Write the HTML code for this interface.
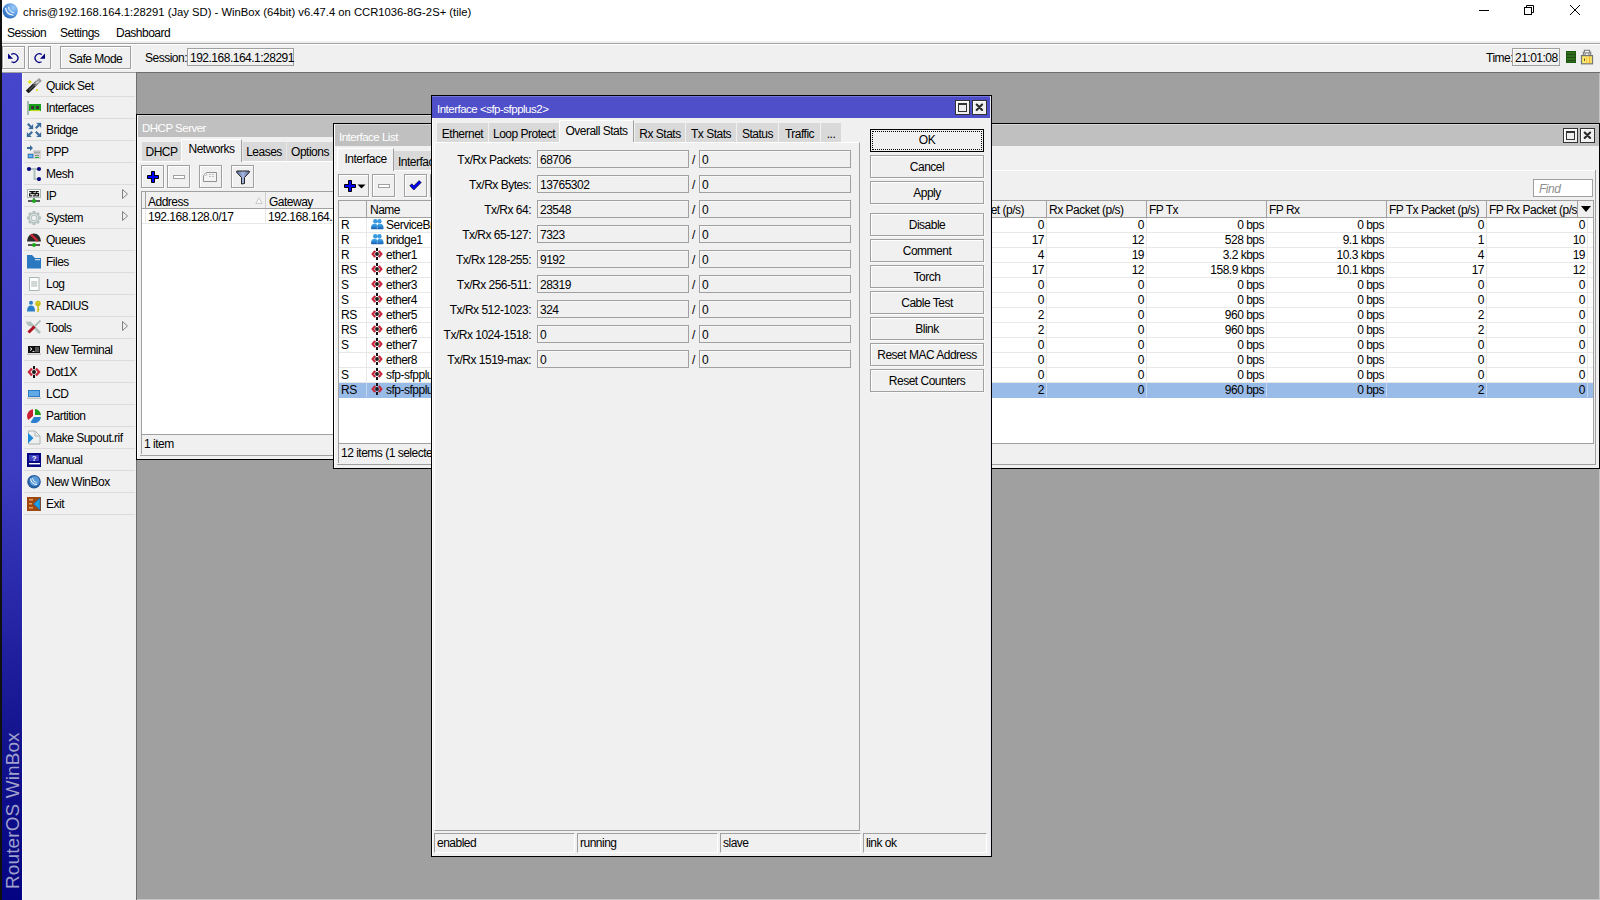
<!DOCTYPE html><html><head><meta charset="utf-8"><style>
*{box-sizing:border-box;margin:0;padding:0}
html,body{width:1600px;height:900px;overflow:hidden}
body{position:relative;background:#a0a0a0;font-family:"Liberation Sans",sans-serif;font-size:12px;letter-spacing:-0.5px;color:#000}
.a{position:absolute}
.t{position:absolute;white-space:nowrap;line-height:15px}
.r{text-align:right}
.c{text-align:center}
.btn{position:absolute;background:#f0f0f0;border:1px solid #a0a0a0;box-shadow:inset 1px 1px 0 #fff,1px 1px 0 #fbfbfb}
.inp{position:absolute;background:#f0f0f0;border:1px solid #a0a0a0;box-shadow:inset 1px 1px 0 #fff}
.sep{position:absolute;height:1px;background:#dcdcdc}
.tabi{position:absolute;background:#d9d9d9}
.wt{color:#fff;font-size:11.5px}
.hdr{position:absolute;background:#f0f0f0}
.tb{position:absolute;width:16px;height:16px;border:1px solid #000;background:#f0f0f0;box-shadow:inset 1px 1px 0 #fff}
</style></head><body>
<div class="a" style="left:0px;top:0px;width:2px;height:900px;background:#101010"></div>
<div class="a" style="left:2px;top:0px;width:1598px;height:41px;background:#fff"></div>
<div class="t " style="left:23px;top:5px;font-size:11.25px;letter-spacing:0">chris@192.168.164.1:28291 (Jay SD) - WinBox (64bit) v6.47.4 on CCR1036-8G-2S+ (tile)</div>
<div class="t " style="left:7px;top:26px;">Session</div>
<div class="t " style="left:60px;top:26px;">Settings</div>
<div class="t " style="left:116px;top:26px;">Dashboard</div>
<div class="a" style="left:2px;top:41px;width:1598px;height:32px;background:#f0f0f0"></div>
<div class="a" style="left:2px;top:43px;width:1598px;height:1px;background:#a0a0a0"></div>
<div class="a" style="left:2px;top:44px;width:1598px;height:1px;background:#fff"></div>
<div class="a" style="left:2px;top:72px;width:1598px;height:1px;background:#a0a0a0"></div>
<div class="btn" style="left:2px;top:46px;width:23px;height:23px;"></div>
<div class="btn" style="left:28px;top:46px;width:23px;height:23px;"></div>
<div class="btn" style="left:60px;top:46px;width:71px;height:23px;"></div>
<div class="t c" style="left:60px;width:71px;top:52px;">Safe Mode</div>
<div class="t " style="left:145px;top:51px;">Session:</div>
<div class="inp" style="left:187px;top:48px;width:107px;height:18px"><div class="t" style="left:2px;top:2px">192.168.164.1:28291</div></div>
<div class="t " style="left:1486px;top:51px;">Time:</div>
<div class="inp" style="left:1512px;top:48px;width:48px;height:18px"><div class="t" style="left:2px;top:2px">21:01:08</div></div>
<svg class="a" style="left:2px;top:3px" width="16" height="16" viewBox="0 0 16 16"><defs><radialGradient id="wbg" cx="0.7" cy="0.3" r="0.9"><stop offset="0" stop-color="#9ccaf8"/><stop offset="0.5" stop-color="#5a9ae0"/><stop offset="1" stop-color="#1656a8"/></radialGradient></defs><circle cx="8.2" cy="7.8" r="7.6" fill="url(#wbg)"/><path d="M3.5 4.8 Q4.5 11.5 11.5 12.2" fill="none" stroke="#fff" stroke-width="1.1"/><path d="M6.4 3.8 Q7 9 12.2 9.8" fill="none" stroke="#fff" stroke-width="0.9"/></svg>
<div class="a" style="left:1479px;top:10px;width:10px;height:1px;background:#000"></div>
<svg class="a" style="left:1523px;top:4px" width="12" height="12" viewBox="0 0 12 12"><rect x="1.5" y="3.5" width="7" height="7" fill="none" stroke="#000" stroke-width="1"/><path d="M3.5 3.5 L3.5 1.5 L10.5 1.5 L10.5 8.5 L8.5 8.5" fill="none" stroke="#000" stroke-width="1"/></svg>
<svg class="a" style="left:1569px;top:4px" width="12" height="12" viewBox="0 0 12 12"><path d="M1 1 L11 11 M11 1 L1 11" stroke="#000" stroke-width="1"/></svg>
<svg class="a" style="left:5px;top:49px" width="18" height="18" viewBox="0 0 18 18"><path d="M6.2 5.5 A4.3 4.3 0 1 1 6.5 12.8" fill="none" stroke="#000080" stroke-width="1.3"/><path d="M3 4.5 L8 9.8 L3 9.8Z" fill="#000080"/></svg>
<svg class="a" style="left:30px;top:49px" width="18" height="18" viewBox="0 0 18 18"><path d="M11.8 5.5 A4.3 4.3 0 1 0 11.5 12.8" fill="none" stroke="#000080" stroke-width="1.3"/><path d="M15 4.5 L10 9.8 L15 9.8Z" fill="#000080"/></svg>
<div class="a" style="left:1566px;top:51px;width:10px;height:12px;background:#2e6e1c;border:1px solid #1c5a10"></div>
<div class="a" style="left:1567px;top:54px;width:8px;height:1px;background:#264a14"></div>
<div class="a" style="left:1567px;top:57px;width:8px;height:1px;background:#264a14"></div>
<div class="a" style="left:1567px;top:60px;width:8px;height:1px;background:#264a14"></div>
<svg class="a" style="left:1580px;top:49px" width="14" height="16" viewBox="0 0 14 16"><path d="M3.3 6.6 V3.2 H4.4 V1.2 H9.6 V3.2 H10.7 V6.6" fill="none" stroke="#777" stroke-width="1.1"/><path d="M5 6.6 V3.9 H9 V6.6" fill="none" stroke="#777" stroke-width="1"/><rect x="1.5" y="6.6" width="11" height="8.2" fill="#fbe96a" stroke="#747474" stroke-width="1.2"/><rect x="6.2" y="7.3" width="1" height="7" fill="#f8c050"/><rect x="9.2" y="7.3" width="1" height="7" fill="#f0a030"/><rect x="4" y="9.6" width="1" height="2.2" fill="#604010"/></svg>
<div class="a" style="left:2px;top:73px;width:20px;height:827px;background:linear-gradient(#4646cc 0%,#3c3cc0 48%,#2a2aac 62%,#14148f 80%,#040482 100%)"></div>
<div class="a" style="left:22px;top:73px;width:114px;height:827px;background:#f0f0f0"></div>
<div class="a" style="left:136px;top:72px;width:1464px;height:1px;background:#6e6e6e"></div>
<div class="a" style="left:136px;top:72px;width:1px;height:828px;background:#6e6e6e"></div>
<div class="a" style="left:1599px;top:73px;width:1px;height:827px;background:#c4c4c4"></div>
<div class="a" style="left:137px;top:899px;width:1463px;height:1px;background:#c4c4c4"></div>
<div class="a" style="left:22px;top:73px;width:1px;height:827px;background:#fafafa"></div>
<div class="t" style="left:3px;top:889px;transform-origin:0 0;transform:rotate(-90deg);font-size:19px;line-height:20px;color:#a0a0cc;letter-spacing:0.1px">RouterOS WinBox</div>
<div class="t " style="left:46px;top:79px;">Quick Set</div>
<div class="a" style="left:24px;top:96px;width:111px;height:1px;background:#dcdcdc"></div>
<div class="t " style="left:46px;top:101px;">Interfaces</div>
<div class="a" style="left:24px;top:118px;width:111px;height:1px;background:#dcdcdc"></div>
<div class="t " style="left:46px;top:123px;">Bridge</div>
<div class="a" style="left:24px;top:140px;width:111px;height:1px;background:#dcdcdc"></div>
<div class="t " style="left:46px;top:145px;">PPP</div>
<div class="a" style="left:24px;top:162px;width:111px;height:1px;background:#dcdcdc"></div>
<div class="t " style="left:46px;top:167px;">Mesh</div>
<div class="a" style="left:24px;top:184px;width:111px;height:1px;background:#dcdcdc"></div>
<div class="t " style="left:46px;top:189px;">IP</div>
<div class="a" style="left:24px;top:206px;width:111px;height:1px;background:#dcdcdc"></div>
<div class="t " style="left:46px;top:211px;">System</div>
<div class="a" style="left:24px;top:228px;width:111px;height:1px;background:#dcdcdc"></div>
<div class="t " style="left:46px;top:233px;">Queues</div>
<div class="a" style="left:24px;top:250px;width:111px;height:1px;background:#dcdcdc"></div>
<div class="t " style="left:46px;top:255px;">Files</div>
<div class="a" style="left:24px;top:272px;width:111px;height:1px;background:#dcdcdc"></div>
<div class="t " style="left:46px;top:277px;">Log</div>
<div class="a" style="left:24px;top:294px;width:111px;height:1px;background:#dcdcdc"></div>
<div class="t " style="left:46px;top:299px;">RADIUS</div>
<div class="a" style="left:24px;top:316px;width:111px;height:1px;background:#dcdcdc"></div>
<div class="t " style="left:46px;top:321px;">Tools</div>
<div class="a" style="left:24px;top:338px;width:111px;height:1px;background:#dcdcdc"></div>
<div class="t " style="left:46px;top:343px;">New Terminal</div>
<div class="a" style="left:24px;top:360px;width:111px;height:1px;background:#dcdcdc"></div>
<div class="t " style="left:46px;top:365px;">Dot1X</div>
<div class="a" style="left:24px;top:382px;width:111px;height:1px;background:#dcdcdc"></div>
<div class="t " style="left:46px;top:387px;">LCD</div>
<div class="a" style="left:24px;top:404px;width:111px;height:1px;background:#dcdcdc"></div>
<div class="t " style="left:46px;top:409px;">Partition</div>
<div class="a" style="left:24px;top:426px;width:111px;height:1px;background:#dcdcdc"></div>
<div class="t " style="left:46px;top:431px;">Make Supout.rif</div>
<div class="a" style="left:24px;top:448px;width:111px;height:1px;background:#dcdcdc"></div>
<div class="t " style="left:46px;top:453px;">Manual</div>
<div class="a" style="left:24px;top:470px;width:111px;height:1px;background:#dcdcdc"></div>
<div class="t " style="left:46px;top:475px;">New WinBox</div>
<div class="a" style="left:24px;top:492px;width:111px;height:1px;background:#dcdcdc"></div>
<div class="t " style="left:46px;top:497px;">Exit</div>
<div class="a" style="left:24px;top:514px;width:111px;height:1px;background:#dcdcdc"></div>
<svg class="a" style="left:26px;top:77px" width="16" height="16" viewBox="0 0 16 16"><line x1="2.6" y1="13.6" x2="9.6" y2="6.8" stroke="#1a1a1a" stroke-width="4" stroke-linecap="square"/><line x1="9.6" y1="6.8" x2="13" y2="3.9" stroke="#9a9a9a" stroke-width="4" stroke-linecap="square"/><line x1="3" y1="13.2" x2="9.4" y2="7" stroke="#505050" stroke-width="1.4"/><line x1="10.2" y1="6.3" x2="12.6" y2="4.2" stroke="#d8d8d8" stroke-width="1.4"/><path d="M3.8 2.4 L4.6 4.1 L6.4 4.9 L4.6 5.7 L3.8 7.4 L3 5.7 L1.2 4.9 L3 4.1Z" fill="#e0e010"/><rect x="10.2" y="12.2" width="1.8" height="1.8" fill="#e0e010"/></svg>
<svg class="a" style="left:26px;top:99px" width="16" height="16" viewBox="0 0 16 16"><rect x="1" y="2" width="2" height="14" fill="#a8b8b4"/><rect x="3" y="5" width="12" height="7" fill="#1aa01a"/><rect x="5.2" y="7" width="2.6" height="3" fill="#3a2a3a"/><rect x="10.1" y="7" width="2.8" height="3" fill="#3a2a3a"/><rect x="4" y="11.2" width="10" height="0.9" fill="#e8e820"/></svg>
<svg class="a" style="left:26px;top:121px" width="16" height="16" viewBox="0 0 16 16"><g fill="#3a6b9c" stroke="#3a6b9c" stroke-width="0.3"><path d="M7 8 L2.5 8 L7 3.5Z"/><path d="M15 2 L10.5 2 L15 6.5Z"/><path d="M1 16 L5.5 16 L1 11.5Z"/><path d="M15 16 L10.5 16 L15 11.5Z"/></g><g stroke="#3a6b9c" stroke-width="2.2"><line x1="5" y1="6" x2="1.8" y2="2.8"/><line x1="13" y1="4" x2="9.8" y2="7.2"/><line x1="3" y1="14" x2="6.2" y2="10.8"/><line x1="13" y1="14" x2="9.8" y2="10.8"/></g></svg>
<svg class="a" style="left:26px;top:143px" width="16" height="16" viewBox="0 0 16 16"><path d="M1 4 L4 4 L4 2 L7 5 L4 8 L4 6 L1 6Z" fill="#3a6b9c"/><rect x="7" y="7" width="8" height="9" fill="#d4d4d4"/><rect x="8" y="8.5" width="6" height="2" fill="#a8a8a8"/><rect x="9" y="12" width="4" height="1" fill="#888"/><rect x="9" y="14" width="4" height="1" fill="#22aa22"/><rect x="1" y="10" width="7" height="6" fill="#e4dcd4"/><rect x="1.8" y="10.8" width="5.6" height="4.4" fill="#2a78c0"/><rect x="2.8" y="11.8" width="3.6" height="2.4" fill="#6ab4f0"/></svg>
<svg class="a" style="left:26px;top:165px" width="16" height="16" viewBox="0 0 16 16"><path d="M3 4 L13 4 M8.5 4 L8.5 14 L13 14" fill="none" stroke="#b0c0bc" stroke-width="2"/><circle cx="3" cy="4" r="2.1" fill="#0a0a80"/><circle cx="13" cy="4" r="2.1" fill="#0a0a80"/><circle cx="13" cy="14" r="2.1" fill="#0a0a80"/></svg>
<svg class="a" style="left:26px;top:187px" width="16" height="16" viewBox="0 0 16 16"><rect x="1.5" y="2.5" width="13" height="8" fill="#fff" stroke="#a8b8b4" stroke-width="1"/><path d="M3.3 4.6 H5.9 V6.7 H3.6 V8.9 H6.1 M9.4 4.6 H6.9 V6.6 H9.2 V8.9 H6.8 M12.8 4.6 H10.3 V6.6 H12.6 V8.9 H10.2" fill="none" stroke="#111" stroke-width="1.1"/><path d="M2 14 L14 14" stroke="#333" stroke-width="1.6"/><rect x="7.5" y="11" width="1" height="2" fill="#222"/><circle cx="8" cy="14" r="2" fill="#18a818"/></svg>
<svg class="a" style="left:26px;top:209px" width="16" height="16" viewBox="0 0 16 16"><g fill="#b4c2c0"><circle cx="8" cy="9" r="5.8"/><rect x="6.5" y="2" width="3" height="14"/><rect x="1" y="7.5" width="14" height="3"/><rect x="6.5" y="2" width="3" height="14" transform="rotate(45 8 9)"/><rect x="6.5" y="2" width="3" height="14" transform="rotate(-45 8 9)"/></g><circle cx="8" cy="9" r="4" fill="#e4eae8"/><circle cx="8" cy="9" r="3.2" fill="#b4c2c0"/><circle cx="8" cy="9" r="2.2" fill="#f0f0f0"/></svg>
<svg class="a" style="left:26px;top:231px" width="16" height="16" viewBox="0 0 16 16"><path d="M1 10.6 A7 8.2 0 0 1 15 10.6Z" fill="#2a2a2a"/><line x1="5" y1="3.5" x2="11.5" y2="10" stroke="#d02830" stroke-width="2.4"/><path d="M2 14 L14 14" stroke="#333" stroke-width="1.6"/><circle cx="8" cy="14" r="2" fill="#18a818"/></svg>
<svg class="a" style="left:26px;top:253px" width="16" height="16" viewBox="0 0 16 16"><path d="M1 2 L6 2 L9 5 L15 5 L15 15.5 L1 15.5Z" fill="#2a78c0"/><rect x="9" y="6.2" width="5" height="1" fill="#e8f0f8"/></svg>
<svg class="a" style="left:26px;top:275px" width="16" height="16" viewBox="0 0 16 16"><rect x="3.5" y="2.5" width="9.5" height="13" fill="#fff" stroke="#a8b8b4" stroke-width="1"/><rect x="5.2" y="6.5" width="6" height="0.9" fill="#9aaaa6"/><rect x="5.2" y="8.5" width="6" height="0.9" fill="#9aaaa6"/><rect x="5.2" y="10.5" width="6" height="0.9" fill="#9aaaa6"/></svg>
<svg class="a" style="left:26px;top:297px" width="16" height="16" viewBox="0 0 16 16"><circle cx="5" cy="5.8" r="2" fill="#2a80c8"/><path d="M1 14.5 Q1 8.6 5 8.6 Q9 8.6 9 14.5Z" fill="#2a80c8"/><circle cx="12" cy="6.5" r="2.7" fill="#c8c010"/><rect x="11.3" y="8" width="1.5" height="7" fill="#c8c010"/><rect x="12" y="12" width="1.5" height="1" fill="#c8c010"/><rect x="11.4" y="5.5" width="1.3" height="0.8" fill="#f0f0a0"/></svg>
<svg class="a" style="left:26px;top:319px" width="16" height="16" viewBox="0 0 16 16"><line x1="3" y1="3" x2="14" y2="14" stroke="#b0c0bc" stroke-width="2.6"/><path d="M1.5 2.5 A3 3 0 0 0 5.5 6" fill="none" stroke="#b0c0bc" stroke-width="2.2"/><line x1="14.5" y1="1.5" x2="9" y2="7" stroke="#b0c0bc" stroke-width="1.8"/><line x1="2.5" y1="13.5" x2="8.5" y2="7.5" stroke="#b01020" stroke-width="3"/></svg>
<svg class="a" style="left:26px;top:341px" width="16" height="16" viewBox="0 0 16 16"><rect x="2" y="5" width="12" height="7" fill="#111"/><rect x="9" y="6" width="4" height="5" fill="#555"/><path d="M4 6.5 L6 8 L4 9.5" fill="none" stroke="#fff" stroke-width="0.9"/><rect x="6.5" y="10" width="2" height="0.8" fill="#fff"/><rect x="1" y="12.6" width="14" height="1.2" fill="#b8b8b8"/></svg>
<svg class="a" style="left:26px;top:363px" width="16" height="16" viewBox="0 0 16 16"><path d="M6 5.4 L2.9 9 L6 12.6" fill="none" stroke="#c8283c" stroke-width="2.3"/><path d="M10 5.4 L13.1 9 L10 12.6" fill="none" stroke="#c8283c" stroke-width="2.3"/><rect x="7" y="3" width="2" height="3.2" fill="#111"/><rect x="7" y="11.8" width="2" height="3.2" fill="#111"/><circle cx="8" cy="9" r="2" fill="#1a1a1a"/></svg>
<svg class="a" style="left:26px;top:385px" width="16" height="16" viewBox="0 0 16 16"><rect x="2" y="5" width="12" height="7" fill="#2a7ac4"/><rect x="3" y="6" width="10" height="5" fill="#62aae6"/><rect x="1" y="12.6" width="14" height="1.2" fill="#b8b8b8"/></svg>
<svg class="a" style="left:26px;top:407px" width="16" height="16" viewBox="0 0 16 16"><path d="M7 2.2 L7 9 L2.3 13 A7 7 0 0 1 7 2.2Z" fill="#c82030"/><path d="M9 2 A6.5 6.5 0 0 1 15 8 L9 8Z" fill="#18a018"/><path d="M8 10 L15 10 A7 7 0 0 1 4.5 15.3Z" fill="#2a80d0"/></svg>
<svg class="a" style="left:26px;top:429px" width="16" height="16" viewBox="0 0 16 16"><path d="M2.5 2 L9 2 L14 7 L14 15 L2.5 15Z" fill="#eef0f0" stroke="#a8b4b2" stroke-width="1"/><path d="M9 2 L9 7 L14 7" fill="none" stroke="#a8b4b2" stroke-width="1"/><path d="M2 4 L7.5 9 L2 14.5Z" fill="#1e8ad8"/></svg>
<svg class="a" style="left:26px;top:451px" width="16" height="16" viewBox="0 0 16 16"><rect x="1" y="2" width="14" height="14" fill="#060680"/><rect x="3" y="4" width="10" height="6" fill="#4040c0"/><text x="8" y="10" font-family="Liberation Sans" font-size="8" font-weight="bold" text-anchor="middle" fill="#fff">?</text><rect x="3" y="12" width="11" height="1.4" fill="#fff"/></svg>
<svg class="a" style="left:26px;top:473px" width="16" height="16" viewBox="0 0 16 16"><circle cx="8" cy="8.8" r="6.8" fill="#245a9e"/><circle cx="8.5" cy="8.2" r="5" fill="#5a9ad8"/><path d="M4.5 5.5 Q5 11 11 11.5" fill="none" stroke="#fff" stroke-width="1"/><path d="M6.5 5 Q7 9 10.5 9.5" fill="none" stroke="#fff" stroke-width="0.8"/></svg>
<svg class="a" style="left:26px;top:495px" width="16" height="16" viewBox="0 0 16 16"><rect x="1" y="2" width="14" height="14" fill="#a04810"/><rect x="3" y="4" width="4" height="1.5" fill="#e8a060"/><rect x="3" y="8" width="3" height="1.5" fill="#e8a060"/><rect x="3" y="12" width="4" height="1.5" fill="#e8a060"/><path d="M14 3 L7.5 9 L14 15Z" fill="#1ea0e8" stroke="#1060a0" stroke-width="0.6"/></svg>
<svg class="a" style="left:122px;top:189px" width="6" height="10" viewBox="0 0 6 10"><path d="M0.5 0.5 L5.5 5 L0.5 9.5Z" fill="#f0f0f0" stroke="#808080" stroke-width="1"/></svg>
<svg class="a" style="left:122px;top:211px" width="6" height="10" viewBox="0 0 6 10"><path d="M0.5 0.5 L5.5 5 L0.5 9.5Z" fill="#f0f0f0" stroke="#808080" stroke-width="1"/></svg>
<svg class="a" style="left:122px;top:321px" width="6" height="10" viewBox="0 0 6 10"><path d="M0.5 0.5 L5.5 5 L0.5 9.5Z" fill="#f0f0f0" stroke="#808080" stroke-width="1"/></svg>
<div class="a" style="left:136px;top:114px;width:325px;height:346px;background:#f0f0f0;border:1px solid #000"></div>
<div class="a" style="left:137px;top:115px;width:323px;height:1px;background:#d8d8d8"></div>
<div class="a" style="left:137px;top:115px;width:1px;height:344px;background:#fff"></div>
<div class="a" style="left:138px;top:116px;width:322px;height:21px;background:#c0c0c0"></div>
<div class="t wt" style="left:142px;top:121px;">DHCP Server</div>
<div class="a" style="left:142px;top:142px;width:39px;height:19px;background:#d9d9d9"></div>
<div class="t c" style="left:142px;width:39px;top:145px;">DHCP</div>
<div class="a" style="left:181px;top:139px;width:61px;height:23px;background:#f0f0f0;border-top:1px solid #fff;border-left:1px solid #fff;border-right:1px solid #a0a0a0"></div>
<div class="t c" style="left:181px;width:61px;top:142px;">Networks</div>
<div class="a" style="left:242px;top:142px;width:44px;height:19px;background:#d9d9d9;border-left:1px solid #e8e8e8"></div>
<div class="t c" style="left:242px;width:44px;top:145px;">Leases</div>
<div class="a" style="left:286px;top:142px;width:55px;height:19px;background:#d9d9d9;border-left:1px solid #e8e8e8"></div>
<div class="t c" style="left:286px;width:48px;top:145px;">Options</div>
<div class="a" style="left:138px;top:161px;width:43px;height:1px;background:#fff"></div>
<div class="a" style="left:242px;top:161px;width:219px;height:1px;background:#fff"></div>
<div class="btn" style="left:141px;top:165px;width:23px;height:23px;"></div>
<div class="btn" style="left:167px;top:165px;width:23px;height:23px;"></div>
<div class="btn" style="left:199px;top:165px;width:23px;height:23px;"></div>
<div class="btn" style="left:231px;top:165px;width:23px;height:23px;"></div>
<svg class="a" style="left:147px;top:171px" width="12" height="12" viewBox="0 0 12 12"><path d="M4.5 0.5 L7.5 0.5 L7.5 4.5 L11.5 4.5 L11.5 7.5 L7.5 7.5 L7.5 11.5 L4.5 11.5 L4.5 7.5 L0.5 7.5 L0.5 4.5 L4.5 4.5Z" fill="#0000ff" stroke="#000" stroke-width="1"/></svg>
<div class="a" style="left:173px;top:175px;width:12px;height:4px;background:#fff;border:1px solid #a0a0a0"></div>
<svg class="a" style="left:203px;top:171px" width="15" height="12" viewBox="0 0 15 12"><path d="M3.5 1.5 L13.5 1.5 L13.5 10.5 L0.5 10.5 L0.5 4.5Z" fill="#f4f4f4" stroke="#909090" stroke-width="1"/><circle cx="2.6" cy="3.4" r="1.1" fill="#fff" stroke="#909090" stroke-width="0.6"/><path d="M6 3.5 H8 M9 3.5 H11 M6 5.5 H8 M9 5.5 H11" stroke="#b0b0b0" stroke-width="0.8"/></svg>
<svg class="a" style="left:236px;top:170px" width="14" height="15" viewBox="0 0 14 15"><defs><linearGradient id="flg" x1="0" y1="0" x2="1" y2="0"><stop offset="0" stop-color="#5a6a9a"/><stop offset="0.5" stop-color="#a8b8e0"/><stop offset="1" stop-color="#5a6a9a"/></linearGradient></defs><path d="M0.8 1 L13.2 1 L13.2 2.5 L8.5 7.5 L8.5 13.5 L5.5 14 L5.5 7.5 L0.8 2.5Z" fill="url(#flg)" stroke="#222" stroke-width="1"/></svg>
<div class="a" style="left:141px;top:191px;width:320px;height:244px;background:#fff;border-left:1px solid #a0a0a0;border-top:1px solid #a0a0a0;border-bottom:1px solid #a0a0a0"></div>
<div class="a" style="left:142px;top:192px;width:319px;height:17px;background:#f0f0f0;border-bottom:1px solid #a0a0a0"></div>
<div class="a" style="left:145px;top:192px;width:1px;height:16px;background:#a0a0a0"></div>
<div class="a" style="left:265px;top:192px;width:1px;height:16px;background:#d0d0d0"></div>
<div class="t " style="left:148px;top:195px;">Address</div>
<div class="t " style="left:269px;top:195px;">Gateway</div>
<svg class="a" style="left:255px;top:197px" width="8" height="7" viewBox="0 0 8 7"><path d="M4 0.8 L7.2 6.5 L0.8 6.5Z" fill="#f8f8f8" stroke="#c0c0c0" stroke-width="0.8"/></svg>
<div class="a" style="left:145px;top:209px;width:1px;height:14px;background:#e8e8e8"></div>
<div class="a" style="left:265px;top:209px;width:1px;height:14px;background:#e8e8e8"></div>
<div class="a" style="left:142px;top:223px;width:319px;height:1px;background:#e8e8e8"></div>
<div class="t " style="left:148px;top:210px;">192.168.128.0/17</div>
<div class="t " style="left:268px;top:210px;">192.168.164.1</div>
<div class="a" style="left:141px;top:435px;width:1px;height:19px;background:#a0a0a0"></div>
<div class="a" style="left:140px;top:455px;width:321px;height:1px;background:#a0a0a0"></div>
<div class="t " style="left:144px;top:437px;">1 item</div>
<div class="a" style="left:333px;top:123px;width:1267px;height:346px;background:#f0f0f0;border:1px solid #000"></div>
<div class="a" style="left:334px;top:124px;width:1265px;height:1px;background:#d8d8d8"></div>
<div class="a" style="left:334px;top:124px;width:1px;height:344px;background:#fff"></div>
<div class="a" style="left:335px;top:125px;width:1264px;height:21px;background:#c0c0c0"></div>
<div class="t wt" style="left:339px;top:130px;">Interface List</div>
<div class="tb" style="left:1563px;top:128px;width:15px;height:15px;border-color:#333"></div>
<div class="a" style="left:1566px;top:131px;width:9px;height:9px;border:1px solid #333;border-top-width:2px;background:#eee"></div>
<div class="tb" style="left:1580px;top:128px;width:15px;height:15px;border-color:#333"></div>
<svg class="a" style="left:1580px;top:128px" width="15" height="15" viewBox="0 0 15 15"><path d="M4.7 4.6 L10.1 10 M10.1 4.6 L4.7 10" stroke="#2a2a2a" stroke-width="2.1" stroke-linecap="round"/></svg>
<div class="a" style="left:337px;top:148px;width:57px;height:23px;background:#f0f0f0;border-top:1px solid #fff;border-left:1px solid #fff;border-right:1px solid #a0a0a0"></div>
<div class="t c" style="left:337px;width:57px;top:152px;">Interface</div>
<div class="a" style="left:394px;top:151px;width:67px;height:19px;background:#d9d9d9"></div>
<div class="t " style="left:398px;top:155px;">Interface List</div>
<div class="a" style="left:335px;top:170px;width:2px;height:1px;background:#fff"></div>
<div class="a" style="left:394px;top:170px;width:1201px;height:1px;background:#fff"></div>
<div class="a" style="left:1595px;top:170px;width:1px;height:295px;background:#a0a0a0"></div>
<div class="btn" style="left:338px;top:174px;width:31px;height:23px;"></div>
<div class="btn" style="left:372px;top:174px;width:23px;height:23px;"></div>
<div class="btn" style="left:404px;top:174px;width:23px;height:23px;"></div>
<div class="btn" style="left:430px;top:174px;width:23px;height:23px;"></div>
<svg class="a" style="left:344px;top:180px" width="12" height="12" viewBox="0 0 12 12"><path d="M4.5 0.5 L7.5 0.5 L7.5 4.5 L11.5 4.5 L11.5 7.5 L7.5 7.5 L7.5 11.5 L4.5 11.5 L4.5 7.5 L0.5 7.5 L0.5 4.5 L4.5 4.5Z" fill="#0000ff" stroke="#000" stroke-width="1"/></svg>
<svg class="a" style="left:357px;top:184px" width="9" height="5" viewBox="0 0 9 5"><path d="M0.5 0.5 L8.5 0.5 L4.5 4.5Z" fill="#000"/></svg>
<div class="a" style="left:378px;top:184px;width:12px;height:4px;background:#fff;border:1px solid #a0a0a0"></div>
<svg class="a" style="left:409px;top:180px" width="13" height="12" viewBox="0 0 13 12"><path d="M0.8 5.8 L2.8 3.8 L4.8 5.8 L10.2 0.6 L12.2 2.6 L4.8 10Z" fill="#0000f0" stroke="#101030" stroke-width="0.7" stroke-linejoin="miter"/></svg>
<div class="a" style="left:1533px;top:179px;width:60px;height:18px;background:#fff;border:1px solid #a0a0a0"></div>
<div class="t " style="left:1539px;top:182px;font-style:italic;color:#909090">Find</div>
<div class="a" style="left:338px;top:200px;width:1256px;height:244px;background:#fff;border:1px solid #a0a0a0"></div>
<div class="a" style="left:338px;top:444px;width:1px;height:19px;background:#a0a0a0"></div>
<div class="a" style="left:337px;top:464px;width:1259px;height:1px;background:#a0a0a0"></div>
<div class="t " style="left:341px;top:446px;">12 items (1 selected)</div>
<div class="a" style="left:339px;top:201px;width:1254px;height:17px;background:#f0f0f0;border-bottom:1px solid #a0a0a0"></div>
<div class="a" style="left:366px;top:201px;width:1px;height:16px;background:#a0a0a0"></div>
<div class="t " style="left:370px;top:203px;">Name</div>
<div class="a" style="left:1046px;top:201px;width:1px;height:16px;background:#a0a0a0"></div>
<div class="a" style="left:1146px;top:201px;width:1px;height:16px;background:#a0a0a0"></div>
<div class="a" style="left:1266px;top:201px;width:1px;height:16px;background:#a0a0a0"></div>
<div class="a" style="left:1386px;top:201px;width:1px;height:16px;background:#a0a0a0"></div>
<div class="a" style="left:1486px;top:201px;width:1px;height:16px;background:#a0a0a0"></div>
<div class="a" style="left:1577px;top:201px;width:1px;height:16px;background:#a0a0a0"></div>
<div class="t" style="left:1049px;top:203px;width:97px;overflow:hidden">Rx Packet (p/s)</div>
<div class="t" style="left:1149px;top:203px;width:117px;overflow:hidden">FP Tx</div>
<div class="t" style="left:1269px;top:203px;width:117px;overflow:hidden">FP Rx</div>
<div class="t" style="left:1389px;top:203px;width:97px;overflow:hidden">FP Tx Packet (p/s)</div>
<div class="t" style="left:1489px;top:203px;width:88px;overflow:hidden">FP Rx Packet (p/s)</div>
<div class="t r" style="right:576px;top:203px;">Tx Packet (p/s)</div>
<div class="a" style="left:1577px;top:201px;width:1px;height:16px;background:#a0a0a0"></div>
<div class="a" style="left:1581px;top:206px;width:0;height:0;border-left:5px solid transparent;border-right:5px solid transparent;border-top:6px solid #000"></div>
<div class="a" style="left:339px;top:232px;width:1254px;height:1px;background:#e8e8e8"></div>
<div class="a" style="left:366px;top:218px;width:1px;height:14px;background:#e8e8e8"></div>
<div class="a" style="left:1046px;top:218px;width:1px;height:14px;background:#e8e8e8"></div>
<div class="a" style="left:1146px;top:218px;width:1px;height:14px;background:#e8e8e8"></div>
<div class="a" style="left:1266px;top:218px;width:1px;height:14px;background:#e8e8e8"></div>
<div class="a" style="left:1386px;top:218px;width:1px;height:14px;background:#e8e8e8"></div>
<div class="a" style="left:1486px;top:218px;width:1px;height:14px;background:#e8e8e8"></div>
<div class="a" style="left:1587px;top:218px;width:1px;height:14px;background:#e8e8e8"></div>
<div class="t " style="left:341px;top:218px;">R</div>
<div class="t " style="left:386px;top:218px;">ServiceBr</div>
<svg class="a" style="left:371px;top:219px" width="13" height="11" viewBox="0 0 13 11"><defs><linearGradient id="bg1" x1="0" y1="0" x2="0" y2="1"><stop offset="0" stop-color="#46aef0"/><stop offset="1" stop-color="#1860b0"/></linearGradient></defs><circle cx="4.3" cy="2.3" r="2.2" fill="#3a9ae0"/><circle cx="8.4" cy="2.3" r="2.2" fill="#3a9ae0"/><path d="M0 9.4 Q0 4.8 3.4 4.8 Q5.6 4.8 6.3 6.2 Q7 4.8 9.2 4.8 Q12.6 4.8 12.6 9.4 Q12.6 10.2 11.6 10.2 L1 10.2 Q0 10.2 0 9.4Z" fill="url(#bg1)"/><path d="M6.3 6.5 V10" stroke="#a8d0f0" stroke-width="0.5"/></svg>
<div class="t r" style="right:556px;top:218px;">0</div>
<div class="t r" style="right:456px;top:218px;">0</div>
<div class="t r" style="right:336px;top:218px;">0 bps</div>
<div class="t r" style="right:216px;top:218px;">0 bps</div>
<div class="t r" style="right:116px;top:218px;">0</div>
<div class="t r" style="right:15px;top:218px;">0</div>
<div class="a" style="left:339px;top:247px;width:1254px;height:1px;background:#e8e8e8"></div>
<div class="a" style="left:366px;top:233px;width:1px;height:14px;background:#e8e8e8"></div>
<div class="a" style="left:1046px;top:233px;width:1px;height:14px;background:#e8e8e8"></div>
<div class="a" style="left:1146px;top:233px;width:1px;height:14px;background:#e8e8e8"></div>
<div class="a" style="left:1266px;top:233px;width:1px;height:14px;background:#e8e8e8"></div>
<div class="a" style="left:1386px;top:233px;width:1px;height:14px;background:#e8e8e8"></div>
<div class="a" style="left:1486px;top:233px;width:1px;height:14px;background:#e8e8e8"></div>
<div class="a" style="left:1587px;top:233px;width:1px;height:14px;background:#e8e8e8"></div>
<div class="t " style="left:341px;top:233px;">R</div>
<div class="t " style="left:386px;top:233px;">bridge1</div>
<svg class="a" style="left:371px;top:234px" width="13" height="11" viewBox="0 0 13 11"><defs><linearGradient id="bg1" x1="0" y1="0" x2="0" y2="1"><stop offset="0" stop-color="#46aef0"/><stop offset="1" stop-color="#1860b0"/></linearGradient></defs><circle cx="4.3" cy="2.3" r="2.2" fill="#3a9ae0"/><circle cx="8.4" cy="2.3" r="2.2" fill="#3a9ae0"/><path d="M0 9.4 Q0 4.8 3.4 4.8 Q5.6 4.8 6.3 6.2 Q7 4.8 9.2 4.8 Q12.6 4.8 12.6 9.4 Q12.6 10.2 11.6 10.2 L1 10.2 Q0 10.2 0 9.4Z" fill="url(#bg1)"/><path d="M6.3 6.5 V10" stroke="#a8d0f0" stroke-width="0.5"/></svg>
<div class="t r" style="right:556px;top:233px;">17</div>
<div class="t r" style="right:456px;top:233px;">12</div>
<div class="t r" style="right:336px;top:233px;">528 bps</div>
<div class="t r" style="right:216px;top:233px;">9.1 kbps</div>
<div class="t r" style="right:116px;top:233px;">1</div>
<div class="t r" style="right:15px;top:233px;">10</div>
<div class="a" style="left:339px;top:262px;width:1254px;height:1px;background:#e8e8e8"></div>
<div class="a" style="left:366px;top:248px;width:1px;height:14px;background:#e8e8e8"></div>
<div class="a" style="left:1046px;top:248px;width:1px;height:14px;background:#e8e8e8"></div>
<div class="a" style="left:1146px;top:248px;width:1px;height:14px;background:#e8e8e8"></div>
<div class="a" style="left:1266px;top:248px;width:1px;height:14px;background:#e8e8e8"></div>
<div class="a" style="left:1386px;top:248px;width:1px;height:14px;background:#e8e8e8"></div>
<div class="a" style="left:1486px;top:248px;width:1px;height:14px;background:#e8e8e8"></div>
<div class="a" style="left:1587px;top:248px;width:1px;height:14px;background:#e8e8e8"></div>
<div class="t " style="left:341px;top:248px;">R</div>
<div class="t " style="left:386px;top:248px;">ether1</div>
<svg class="a" style="left:371px;top:248px" width="12" height="14" viewBox="0 0 12 14"><path d="M4.2 2.9 L1.7 6 L4.2 9.1" fill="none" stroke="#c8283c" stroke-width="2.3"/><path d="M7.8 2.9 L10.3 6 L7.8 9.1" fill="none" stroke="#c8283c" stroke-width="2.3"/><rect x="5" y="0" width="2" height="3" fill="#111"/><rect x="5" y="9" width="2" height="3" fill="#111"/><circle cx="6" cy="6" r="1.9" fill="#1a1a1a"/></svg>
<div class="t r" style="right:556px;top:248px;">4</div>
<div class="t r" style="right:456px;top:248px;">19</div>
<div class="t r" style="right:336px;top:248px;">3.2 kbps</div>
<div class="t r" style="right:216px;top:248px;">10.3 kbps</div>
<div class="t r" style="right:116px;top:248px;">4</div>
<div class="t r" style="right:15px;top:248px;">19</div>
<div class="a" style="left:339px;top:277px;width:1254px;height:1px;background:#e8e8e8"></div>
<div class="a" style="left:366px;top:263px;width:1px;height:14px;background:#e8e8e8"></div>
<div class="a" style="left:1046px;top:263px;width:1px;height:14px;background:#e8e8e8"></div>
<div class="a" style="left:1146px;top:263px;width:1px;height:14px;background:#e8e8e8"></div>
<div class="a" style="left:1266px;top:263px;width:1px;height:14px;background:#e8e8e8"></div>
<div class="a" style="left:1386px;top:263px;width:1px;height:14px;background:#e8e8e8"></div>
<div class="a" style="left:1486px;top:263px;width:1px;height:14px;background:#e8e8e8"></div>
<div class="a" style="left:1587px;top:263px;width:1px;height:14px;background:#e8e8e8"></div>
<div class="t " style="left:341px;top:263px;">RS</div>
<div class="t " style="left:386px;top:263px;">ether2</div>
<svg class="a" style="left:371px;top:263px" width="12" height="14" viewBox="0 0 12 14"><path d="M4.2 2.9 L1.7 6 L4.2 9.1" fill="none" stroke="#c8283c" stroke-width="2.3"/><path d="M7.8 2.9 L10.3 6 L7.8 9.1" fill="none" stroke="#c8283c" stroke-width="2.3"/><rect x="5" y="0" width="2" height="3" fill="#111"/><rect x="5" y="9" width="2" height="3" fill="#111"/><circle cx="6" cy="6" r="1.9" fill="#1a1a1a"/></svg>
<div class="t r" style="right:556px;top:263px;">17</div>
<div class="t r" style="right:456px;top:263px;">12</div>
<div class="t r" style="right:336px;top:263px;">158.9 kbps</div>
<div class="t r" style="right:216px;top:263px;">10.1 kbps</div>
<div class="t r" style="right:116px;top:263px;">17</div>
<div class="t r" style="right:15px;top:263px;">12</div>
<div class="a" style="left:339px;top:292px;width:1254px;height:1px;background:#e8e8e8"></div>
<div class="a" style="left:366px;top:278px;width:1px;height:14px;background:#e8e8e8"></div>
<div class="a" style="left:1046px;top:278px;width:1px;height:14px;background:#e8e8e8"></div>
<div class="a" style="left:1146px;top:278px;width:1px;height:14px;background:#e8e8e8"></div>
<div class="a" style="left:1266px;top:278px;width:1px;height:14px;background:#e8e8e8"></div>
<div class="a" style="left:1386px;top:278px;width:1px;height:14px;background:#e8e8e8"></div>
<div class="a" style="left:1486px;top:278px;width:1px;height:14px;background:#e8e8e8"></div>
<div class="a" style="left:1587px;top:278px;width:1px;height:14px;background:#e8e8e8"></div>
<div class="t " style="left:341px;top:278px;">S</div>
<div class="t " style="left:386px;top:278px;">ether3</div>
<svg class="a" style="left:371px;top:278px" width="12" height="14" viewBox="0 0 12 14"><path d="M4.2 2.9 L1.7 6 L4.2 9.1" fill="none" stroke="#c8283c" stroke-width="2.3"/><path d="M7.8 2.9 L10.3 6 L7.8 9.1" fill="none" stroke="#c8283c" stroke-width="2.3"/><rect x="5" y="0" width="2" height="3" fill="#111"/><rect x="5" y="9" width="2" height="3" fill="#111"/><circle cx="6" cy="6" r="1.9" fill="#1a1a1a"/></svg>
<div class="t r" style="right:556px;top:278px;">0</div>
<div class="t r" style="right:456px;top:278px;">0</div>
<div class="t r" style="right:336px;top:278px;">0 bps</div>
<div class="t r" style="right:216px;top:278px;">0 bps</div>
<div class="t r" style="right:116px;top:278px;">0</div>
<div class="t r" style="right:15px;top:278px;">0</div>
<div class="a" style="left:339px;top:307px;width:1254px;height:1px;background:#e8e8e8"></div>
<div class="a" style="left:366px;top:293px;width:1px;height:14px;background:#e8e8e8"></div>
<div class="a" style="left:1046px;top:293px;width:1px;height:14px;background:#e8e8e8"></div>
<div class="a" style="left:1146px;top:293px;width:1px;height:14px;background:#e8e8e8"></div>
<div class="a" style="left:1266px;top:293px;width:1px;height:14px;background:#e8e8e8"></div>
<div class="a" style="left:1386px;top:293px;width:1px;height:14px;background:#e8e8e8"></div>
<div class="a" style="left:1486px;top:293px;width:1px;height:14px;background:#e8e8e8"></div>
<div class="a" style="left:1587px;top:293px;width:1px;height:14px;background:#e8e8e8"></div>
<div class="t " style="left:341px;top:293px;">S</div>
<div class="t " style="left:386px;top:293px;">ether4</div>
<svg class="a" style="left:371px;top:293px" width="12" height="14" viewBox="0 0 12 14"><path d="M4.2 2.9 L1.7 6 L4.2 9.1" fill="none" stroke="#c8283c" stroke-width="2.3"/><path d="M7.8 2.9 L10.3 6 L7.8 9.1" fill="none" stroke="#c8283c" stroke-width="2.3"/><rect x="5" y="0" width="2" height="3" fill="#111"/><rect x="5" y="9" width="2" height="3" fill="#111"/><circle cx="6" cy="6" r="1.9" fill="#1a1a1a"/></svg>
<div class="t r" style="right:556px;top:293px;">0</div>
<div class="t r" style="right:456px;top:293px;">0</div>
<div class="t r" style="right:336px;top:293px;">0 bps</div>
<div class="t r" style="right:216px;top:293px;">0 bps</div>
<div class="t r" style="right:116px;top:293px;">0</div>
<div class="t r" style="right:15px;top:293px;">0</div>
<div class="a" style="left:339px;top:322px;width:1254px;height:1px;background:#e8e8e8"></div>
<div class="a" style="left:366px;top:308px;width:1px;height:14px;background:#e8e8e8"></div>
<div class="a" style="left:1046px;top:308px;width:1px;height:14px;background:#e8e8e8"></div>
<div class="a" style="left:1146px;top:308px;width:1px;height:14px;background:#e8e8e8"></div>
<div class="a" style="left:1266px;top:308px;width:1px;height:14px;background:#e8e8e8"></div>
<div class="a" style="left:1386px;top:308px;width:1px;height:14px;background:#e8e8e8"></div>
<div class="a" style="left:1486px;top:308px;width:1px;height:14px;background:#e8e8e8"></div>
<div class="a" style="left:1587px;top:308px;width:1px;height:14px;background:#e8e8e8"></div>
<div class="t " style="left:341px;top:308px;">RS</div>
<div class="t " style="left:386px;top:308px;">ether5</div>
<svg class="a" style="left:371px;top:308px" width="12" height="14" viewBox="0 0 12 14"><path d="M4.2 2.9 L1.7 6 L4.2 9.1" fill="none" stroke="#c8283c" stroke-width="2.3"/><path d="M7.8 2.9 L10.3 6 L7.8 9.1" fill="none" stroke="#c8283c" stroke-width="2.3"/><rect x="5" y="0" width="2" height="3" fill="#111"/><rect x="5" y="9" width="2" height="3" fill="#111"/><circle cx="6" cy="6" r="1.9" fill="#1a1a1a"/></svg>
<div class="t r" style="right:556px;top:308px;">2</div>
<div class="t r" style="right:456px;top:308px;">0</div>
<div class="t r" style="right:336px;top:308px;">960 bps</div>
<div class="t r" style="right:216px;top:308px;">0 bps</div>
<div class="t r" style="right:116px;top:308px;">2</div>
<div class="t r" style="right:15px;top:308px;">0</div>
<div class="a" style="left:339px;top:337px;width:1254px;height:1px;background:#e8e8e8"></div>
<div class="a" style="left:366px;top:323px;width:1px;height:14px;background:#e8e8e8"></div>
<div class="a" style="left:1046px;top:323px;width:1px;height:14px;background:#e8e8e8"></div>
<div class="a" style="left:1146px;top:323px;width:1px;height:14px;background:#e8e8e8"></div>
<div class="a" style="left:1266px;top:323px;width:1px;height:14px;background:#e8e8e8"></div>
<div class="a" style="left:1386px;top:323px;width:1px;height:14px;background:#e8e8e8"></div>
<div class="a" style="left:1486px;top:323px;width:1px;height:14px;background:#e8e8e8"></div>
<div class="a" style="left:1587px;top:323px;width:1px;height:14px;background:#e8e8e8"></div>
<div class="t " style="left:341px;top:323px;">RS</div>
<div class="t " style="left:386px;top:323px;">ether6</div>
<svg class="a" style="left:371px;top:323px" width="12" height="14" viewBox="0 0 12 14"><path d="M4.2 2.9 L1.7 6 L4.2 9.1" fill="none" stroke="#c8283c" stroke-width="2.3"/><path d="M7.8 2.9 L10.3 6 L7.8 9.1" fill="none" stroke="#c8283c" stroke-width="2.3"/><rect x="5" y="0" width="2" height="3" fill="#111"/><rect x="5" y="9" width="2" height="3" fill="#111"/><circle cx="6" cy="6" r="1.9" fill="#1a1a1a"/></svg>
<div class="t r" style="right:556px;top:323px;">2</div>
<div class="t r" style="right:456px;top:323px;">0</div>
<div class="t r" style="right:336px;top:323px;">960 bps</div>
<div class="t r" style="right:216px;top:323px;">0 bps</div>
<div class="t r" style="right:116px;top:323px;">2</div>
<div class="t r" style="right:15px;top:323px;">0</div>
<div class="a" style="left:339px;top:352px;width:1254px;height:1px;background:#e8e8e8"></div>
<div class="a" style="left:366px;top:338px;width:1px;height:14px;background:#e8e8e8"></div>
<div class="a" style="left:1046px;top:338px;width:1px;height:14px;background:#e8e8e8"></div>
<div class="a" style="left:1146px;top:338px;width:1px;height:14px;background:#e8e8e8"></div>
<div class="a" style="left:1266px;top:338px;width:1px;height:14px;background:#e8e8e8"></div>
<div class="a" style="left:1386px;top:338px;width:1px;height:14px;background:#e8e8e8"></div>
<div class="a" style="left:1486px;top:338px;width:1px;height:14px;background:#e8e8e8"></div>
<div class="a" style="left:1587px;top:338px;width:1px;height:14px;background:#e8e8e8"></div>
<div class="t " style="left:341px;top:338px;">S</div>
<div class="t " style="left:386px;top:338px;">ether7</div>
<svg class="a" style="left:371px;top:338px" width="12" height="14" viewBox="0 0 12 14"><path d="M4.2 2.9 L1.7 6 L4.2 9.1" fill="none" stroke="#c8283c" stroke-width="2.3"/><path d="M7.8 2.9 L10.3 6 L7.8 9.1" fill="none" stroke="#c8283c" stroke-width="2.3"/><rect x="5" y="0" width="2" height="3" fill="#111"/><rect x="5" y="9" width="2" height="3" fill="#111"/><circle cx="6" cy="6" r="1.9" fill="#1a1a1a"/></svg>
<div class="t r" style="right:556px;top:338px;">0</div>
<div class="t r" style="right:456px;top:338px;">0</div>
<div class="t r" style="right:336px;top:338px;">0 bps</div>
<div class="t r" style="right:216px;top:338px;">0 bps</div>
<div class="t r" style="right:116px;top:338px;">0</div>
<div class="t r" style="right:15px;top:338px;">0</div>
<div class="a" style="left:339px;top:367px;width:1254px;height:1px;background:#e8e8e8"></div>
<div class="a" style="left:366px;top:353px;width:1px;height:14px;background:#e8e8e8"></div>
<div class="a" style="left:1046px;top:353px;width:1px;height:14px;background:#e8e8e8"></div>
<div class="a" style="left:1146px;top:353px;width:1px;height:14px;background:#e8e8e8"></div>
<div class="a" style="left:1266px;top:353px;width:1px;height:14px;background:#e8e8e8"></div>
<div class="a" style="left:1386px;top:353px;width:1px;height:14px;background:#e8e8e8"></div>
<div class="a" style="left:1486px;top:353px;width:1px;height:14px;background:#e8e8e8"></div>
<div class="a" style="left:1587px;top:353px;width:1px;height:14px;background:#e8e8e8"></div>
<div class="t " style="left:341px;top:353px;"></div>
<div class="t " style="left:386px;top:353px;">ether8</div>
<svg class="a" style="left:371px;top:353px" width="12" height="14" viewBox="0 0 12 14"><path d="M4.2 2.9 L1.7 6 L4.2 9.1" fill="none" stroke="#c8283c" stroke-width="2.3"/><path d="M7.8 2.9 L10.3 6 L7.8 9.1" fill="none" stroke="#c8283c" stroke-width="2.3"/><rect x="5" y="0" width="2" height="3" fill="#111"/><rect x="5" y="9" width="2" height="3" fill="#111"/><circle cx="6" cy="6" r="1.9" fill="#1a1a1a"/></svg>
<div class="t r" style="right:556px;top:353px;">0</div>
<div class="t r" style="right:456px;top:353px;">0</div>
<div class="t r" style="right:336px;top:353px;">0 bps</div>
<div class="t r" style="right:216px;top:353px;">0 bps</div>
<div class="t r" style="right:116px;top:353px;">0</div>
<div class="t r" style="right:15px;top:353px;">0</div>
<div class="a" style="left:339px;top:382px;width:1254px;height:1px;background:#e8e8e8"></div>
<div class="a" style="left:366px;top:368px;width:1px;height:14px;background:#e8e8e8"></div>
<div class="a" style="left:1046px;top:368px;width:1px;height:14px;background:#e8e8e8"></div>
<div class="a" style="left:1146px;top:368px;width:1px;height:14px;background:#e8e8e8"></div>
<div class="a" style="left:1266px;top:368px;width:1px;height:14px;background:#e8e8e8"></div>
<div class="a" style="left:1386px;top:368px;width:1px;height:14px;background:#e8e8e8"></div>
<div class="a" style="left:1486px;top:368px;width:1px;height:14px;background:#e8e8e8"></div>
<div class="a" style="left:1587px;top:368px;width:1px;height:14px;background:#e8e8e8"></div>
<div class="t " style="left:341px;top:368px;">S</div>
<div class="t " style="left:386px;top:368px;">sfp-sfpplus1</div>
<svg class="a" style="left:371px;top:368px" width="12" height="14" viewBox="0 0 12 14"><path d="M4.2 2.9 L1.7 6 L4.2 9.1" fill="none" stroke="#c8283c" stroke-width="2.3"/><path d="M7.8 2.9 L10.3 6 L7.8 9.1" fill="none" stroke="#c8283c" stroke-width="2.3"/><rect x="5" y="0" width="2" height="3" fill="#111"/><rect x="5" y="9" width="2" height="3" fill="#111"/><circle cx="6" cy="6" r="1.9" fill="#1a1a1a"/></svg>
<div class="t r" style="right:556px;top:368px;">0</div>
<div class="t r" style="right:456px;top:368px;">0</div>
<div class="t r" style="right:336px;top:368px;">0 bps</div>
<div class="t r" style="right:216px;top:368px;">0 bps</div>
<div class="t r" style="right:116px;top:368px;">0</div>
<div class="t r" style="right:15px;top:368px;">0</div>
<div class="a" style="left:339px;top:383px;width:1254px;height:15px;background:#99bbe8"></div>
<div class="a" style="left:339px;top:397px;width:1254px;height:1px;background:#99bbe8"></div>
<div class="a" style="left:366px;top:383px;width:1px;height:14px;background:#c4d6ef"></div>
<div class="a" style="left:1046px;top:383px;width:1px;height:14px;background:#c4d6ef"></div>
<div class="a" style="left:1146px;top:383px;width:1px;height:14px;background:#c4d6ef"></div>
<div class="a" style="left:1266px;top:383px;width:1px;height:14px;background:#c4d6ef"></div>
<div class="a" style="left:1386px;top:383px;width:1px;height:14px;background:#c4d6ef"></div>
<div class="a" style="left:1486px;top:383px;width:1px;height:14px;background:#c4d6ef"></div>
<div class="a" style="left:1587px;top:383px;width:1px;height:14px;background:#c4d6ef"></div>
<div class="t " style="left:341px;top:383px;">RS</div>
<div class="t " style="left:386px;top:383px;">sfp-sfpplus2</div>
<svg class="a" style="left:371px;top:383px" width="12" height="14" viewBox="0 0 12 14"><path d="M4.2 2.9 L1.7 6 L4.2 9.1" fill="none" stroke="#c8283c" stroke-width="2.3"/><path d="M7.8 2.9 L10.3 6 L7.8 9.1" fill="none" stroke="#c8283c" stroke-width="2.3"/><rect x="5" y="0" width="2" height="3" fill="#111"/><rect x="5" y="9" width="2" height="3" fill="#111"/><circle cx="6" cy="6" r="1.9" fill="#1a1a1a"/></svg>
<div class="t r" style="right:556px;top:383px;">2</div>
<div class="t r" style="right:456px;top:383px;">0</div>
<div class="t r" style="right:336px;top:383px;">960 bps</div>
<div class="t r" style="right:216px;top:383px;">0 bps</div>
<div class="t r" style="right:116px;top:383px;">2</div>
<div class="t r" style="right:15px;top:383px;">0</div>
<div class="a" style="left:431px;top:95px;width:561px;height:762px;background:#f0f0f0;border:1px solid #000"></div>
<div class="a" style="left:432px;top:118px;width:1px;height:738px;background:#fff"></div>
<div class="a" style="left:432px;top:96px;width:559px;height:22px;background:#4f4fc9;border-top:1px solid #7474dc"></div>
<div class="a" style="left:990px;top:96px;width:1px;height:760px;background:#e8e8f0"></div>
<div class="t wt" style="left:437px;top:102px;">Interface &lt;sfp-sfpplus2&gt;</div>
<div class="tb" style="left:955px;top:100px;width:15px;height:15px;border-color:#333"></div>
<div class="a" style="left:958px;top:103px;width:9px;height:9px;border:1px solid #333;border-top-width:2px;background:#eee"></div>
<div class="tb" style="left:972px;top:100px;width:15px;height:15px;border-color:#333"></div>
<svg class="a" style="left:972px;top:100px" width="15" height="15" viewBox="0 0 15 15"><path d="M4.7 4.6 L10.1 10 M10.1 4.6 L4.7 10" stroke="#2a2a2a" stroke-width="2.1" stroke-linecap="round"/></svg>
<div class="a" style="left:437px;top:123px;width:51px;height:19px;background:#d9d9d9"></div>
<div class="t c" style="left:437px;width:51px;top:127px;">Ethernet</div>
<div class="a" style="left:489px;top:123px;width:70px;height:19px;background:#d9d9d9"></div>
<div class="t c" style="left:489px;width:70px;top:127px;">Loop Protect</div>
<div class="a" style="left:559px;top:120px;width:75px;height:23px;background:#f0f0f0;border-top:1px solid #fff;border-left:1px solid #fff;border-right:1px solid #a0a0a0"></div>
<div class="t c" style="left:559px;width:75px;top:124px;">Overall Stats</div>
<div class="a" style="left:635px;top:123px;width:50px;height:19px;background:#d9d9d9"></div>
<div class="t c" style="left:635px;width:50px;top:127px;">Rx Stats</div>
<div class="a" style="left:686px;top:123px;width:50px;height:19px;background:#d9d9d9"></div>
<div class="t c" style="left:686px;width:50px;top:127px;">Tx Stats</div>
<div class="a" style="left:737px;top:123px;width:41px;height:19px;background:#d9d9d9"></div>
<div class="t c" style="left:737px;width:41px;top:127px;">Status</div>
<div class="a" style="left:779px;top:123px;width:41px;height:19px;background:#d9d9d9"></div>
<div class="t c" style="left:779px;width:41px;top:127px;">Traffic</div>
<div class="a" style="left:821px;top:123px;width:20px;height:19px;background:#d9d9d9"></div>
<div class="t c" style="left:821px;width:20px;top:127px;">...</div>
<div class="a" style="left:434px;top:142px;width:426px;height:689px;border-top:1px solid #fff;border-left:1px solid #fff;border-right:1px solid #a0a0a0;border-bottom:1px solid #a0a0a0"></div>
<div class="a" style="left:559px;top:142px;width:75px;height:1px;background:#f0f0f0"></div>
<div class="t r" style="right:1069px;top:153px;">Tx/Rx Packets:</div>
<div class="a" style="left:537px;top:150px;width:152px;height:18px;background:#f0f0f0;border:1px solid #a0a0a0;box-shadow:inset 1px 1px 0 #f8f8f8"></div>
<div class="t " style="left:540px;top:153px;">68706</div>
<div class="t " style="left:692px;top:153px;">/</div>
<div class="a" style="left:699px;top:150px;width:152px;height:18px;background:#f0f0f0;border:1px solid #a0a0a0;box-shadow:inset 1px 1px 0 #f8f8f8"></div>
<div class="t " style="left:702px;top:153px;">0</div>
<div class="t r" style="right:1069px;top:178px;">Tx/Rx Bytes:</div>
<div class="a" style="left:537px;top:175px;width:152px;height:18px;background:#f0f0f0;border:1px solid #a0a0a0;box-shadow:inset 1px 1px 0 #f8f8f8"></div>
<div class="t " style="left:540px;top:178px;">13765302</div>
<div class="t " style="left:692px;top:178px;">/</div>
<div class="a" style="left:699px;top:175px;width:152px;height:18px;background:#f0f0f0;border:1px solid #a0a0a0;box-shadow:inset 1px 1px 0 #f8f8f8"></div>
<div class="t " style="left:702px;top:178px;">0</div>
<div class="t r" style="right:1069px;top:203px;">Tx/Rx 64:</div>
<div class="a" style="left:537px;top:200px;width:152px;height:18px;background:#f0f0f0;border:1px solid #a0a0a0;box-shadow:inset 1px 1px 0 #f8f8f8"></div>
<div class="t " style="left:540px;top:203px;">23548</div>
<div class="t " style="left:692px;top:203px;">/</div>
<div class="a" style="left:699px;top:200px;width:152px;height:18px;background:#f0f0f0;border:1px solid #a0a0a0;box-shadow:inset 1px 1px 0 #f8f8f8"></div>
<div class="t " style="left:702px;top:203px;">0</div>
<div class="t r" style="right:1069px;top:228px;">Tx/Rx 65-127:</div>
<div class="a" style="left:537px;top:225px;width:152px;height:18px;background:#f0f0f0;border:1px solid #a0a0a0;box-shadow:inset 1px 1px 0 #f8f8f8"></div>
<div class="t " style="left:540px;top:228px;">7323</div>
<div class="t " style="left:692px;top:228px;">/</div>
<div class="a" style="left:699px;top:225px;width:152px;height:18px;background:#f0f0f0;border:1px solid #a0a0a0;box-shadow:inset 1px 1px 0 #f8f8f8"></div>
<div class="t " style="left:702px;top:228px;">0</div>
<div class="t r" style="right:1069px;top:253px;">Tx/Rx 128-255:</div>
<div class="a" style="left:537px;top:250px;width:152px;height:18px;background:#f0f0f0;border:1px solid #a0a0a0;box-shadow:inset 1px 1px 0 #f8f8f8"></div>
<div class="t " style="left:540px;top:253px;">9192</div>
<div class="t " style="left:692px;top:253px;">/</div>
<div class="a" style="left:699px;top:250px;width:152px;height:18px;background:#f0f0f0;border:1px solid #a0a0a0;box-shadow:inset 1px 1px 0 #f8f8f8"></div>
<div class="t " style="left:702px;top:253px;">0</div>
<div class="t r" style="right:1069px;top:278px;">Tx/Rx 256-511:</div>
<div class="a" style="left:537px;top:275px;width:152px;height:18px;background:#f0f0f0;border:1px solid #a0a0a0;box-shadow:inset 1px 1px 0 #f8f8f8"></div>
<div class="t " style="left:540px;top:278px;">28319</div>
<div class="t " style="left:692px;top:278px;">/</div>
<div class="a" style="left:699px;top:275px;width:152px;height:18px;background:#f0f0f0;border:1px solid #a0a0a0;box-shadow:inset 1px 1px 0 #f8f8f8"></div>
<div class="t " style="left:702px;top:278px;">0</div>
<div class="t r" style="right:1069px;top:303px;">Tx/Rx 512-1023:</div>
<div class="a" style="left:537px;top:300px;width:152px;height:18px;background:#f0f0f0;border:1px solid #a0a0a0;box-shadow:inset 1px 1px 0 #f8f8f8"></div>
<div class="t " style="left:540px;top:303px;">324</div>
<div class="t " style="left:692px;top:303px;">/</div>
<div class="a" style="left:699px;top:300px;width:152px;height:18px;background:#f0f0f0;border:1px solid #a0a0a0;box-shadow:inset 1px 1px 0 #f8f8f8"></div>
<div class="t " style="left:702px;top:303px;">0</div>
<div class="t r" style="right:1069px;top:328px;">Tx/Rx 1024-1518:</div>
<div class="a" style="left:537px;top:325px;width:152px;height:18px;background:#f0f0f0;border:1px solid #a0a0a0;box-shadow:inset 1px 1px 0 #f8f8f8"></div>
<div class="t " style="left:540px;top:328px;">0</div>
<div class="t " style="left:692px;top:328px;">/</div>
<div class="a" style="left:699px;top:325px;width:152px;height:18px;background:#f0f0f0;border:1px solid #a0a0a0;box-shadow:inset 1px 1px 0 #f8f8f8"></div>
<div class="t " style="left:702px;top:328px;">0</div>
<div class="t r" style="right:1069px;top:353px;">Tx/Rx 1519-max:</div>
<div class="a" style="left:537px;top:350px;width:152px;height:18px;background:#f0f0f0;border:1px solid #a0a0a0;box-shadow:inset 1px 1px 0 #f8f8f8"></div>
<div class="t " style="left:540px;top:353px;">0</div>
<div class="t " style="left:692px;top:353px;">/</div>
<div class="a" style="left:699px;top:350px;width:152px;height:18px;background:#f0f0f0;border:1px solid #a0a0a0;box-shadow:inset 1px 1px 0 #f8f8f8"></div>
<div class="t " style="left:702px;top:353px;">0</div>
<div class="a" style="left:870px;top:129px;width:114px;height:23px;background:#f0f0f0;border:1px solid #000"></div>
<div class="a" style="left:872px;top:131px;width:110px;height:19px;border:1px dotted #000"></div>
<div class="t c" style="left:870px;width:114px;top:133px;">OK</div>
<div class="btn" style="left:870px;top:155px;width:114px;height:23px;"></div>
<div class="t c" style="left:870px;width:114px;top:160px;">Cancel</div>
<div class="btn" style="left:870px;top:181px;width:114px;height:23px;"></div>
<div class="t c" style="left:870px;width:114px;top:186px;">Apply</div>
<div class="btn" style="left:870px;top:213px;width:114px;height:23px;"></div>
<div class="t c" style="left:870px;width:114px;top:218px;">Disable</div>
<div class="btn" style="left:870px;top:239px;width:114px;height:23px;"></div>
<div class="t c" style="left:870px;width:114px;top:244px;">Comment</div>
<div class="btn" style="left:870px;top:265px;width:114px;height:23px;"></div>
<div class="t c" style="left:870px;width:114px;top:270px;">Torch</div>
<div class="btn" style="left:870px;top:291px;width:114px;height:23px;"></div>
<div class="t c" style="left:870px;width:114px;top:296px;">Cable Test</div>
<div class="btn" style="left:870px;top:317px;width:114px;height:23px;"></div>
<div class="t c" style="left:870px;width:114px;top:322px;">Blink</div>
<div class="btn" style="left:870px;top:343px;width:114px;height:23px;"></div>
<div class="t c" style="left:870px;width:114px;top:348px;">Reset MAC Address</div>
<div class="btn" style="left:870px;top:369px;width:114px;height:23px;"></div>
<div class="t c" style="left:870px;width:114px;top:374px;">Reset Counters</div>
<div class="a" style="left:434px;top:833px;width:141px;height:20px;background:#f0f0f0;border-top:1px solid #a0a0a0;border-left:1px solid #a0a0a0;border-bottom:1px solid #fff;border-right:1px solid #fff"></div>
<div class="t " style="left:437px;top:836px;">enabled</div>
<div class="a" style="left:577px;top:833px;width:141px;height:20px;background:#f0f0f0;border-top:1px solid #a0a0a0;border-left:1px solid #a0a0a0;border-bottom:1px solid #fff;border-right:1px solid #fff"></div>
<div class="t " style="left:580px;top:836px;">running</div>
<div class="a" style="left:720px;top:833px;width:141px;height:20px;background:#f0f0f0;border-top:1px solid #a0a0a0;border-left:1px solid #a0a0a0;border-bottom:1px solid #fff;border-right:1px solid #fff"></div>
<div class="t " style="left:723px;top:836px;">slave</div>
<div class="a" style="left:863px;top:833px;width:124px;height:20px;background:#f0f0f0;border-top:1px solid #a0a0a0;border-left:1px solid #a0a0a0;border-bottom:1px solid #fff;border-right:1px solid #fff"></div>
<div class="t " style="left:866px;top:836px;">link ok</div>
</body></html>
